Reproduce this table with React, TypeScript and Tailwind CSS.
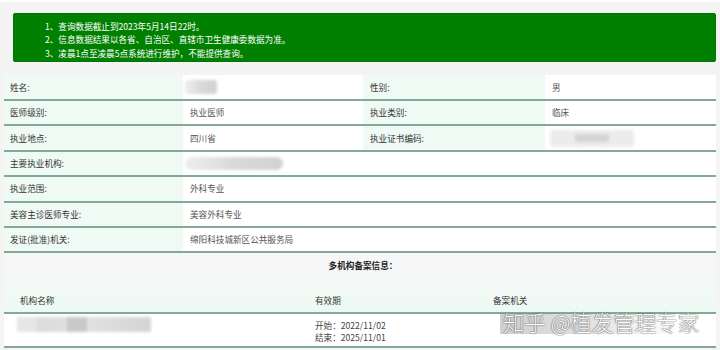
import React from "react";

const FONT = {
  fontFamily: '"Noto Sans CJK SC", "Noto Sans", sans-serif',
};

function Blur({ w, h, className = "" }: { w: number; h: number; className?: string }) {
  return (
    <div
      className={"rounded-[3px] blur-[1.5px] bg-gradient-to-r from-[#eeeeee] via-[#d9d9d9] to-[#d2d2d2] " + className}
      style={{ width: w, height: h }}
    />
  );
}

const rowBorder = "border-b-2 border-[#84a99b]";

export default function App() {
  return (
    <div
      className="relative w-[720px] h-[350px] overflow-hidden bg-[#f4f4f4] text-[8.6px] text-[#333]"
      style={FONT}
    >
      <div className="h-[2px] bg-white" />
      {/* Notice box */}
      <div className="ml-[13px] mr-[4px] mt-[11px] h-[49px] rounded-[2px] bg-[#008000] border border-[#0a6e0a] pl-[31px] pt-[5.5px] text-white leading-[13.6px] text-[8.6px]">
        <div>1、查询数据截止到2023年5月14日22时。</div>
        <div>2、信息数据结果以各省、自治区、直辖市卫生健康委数据为准。</div>
        <div>3、凌晨1点至凌晨5点系统进行维护，不能提供查询。</div>
      </div>

      {/* Info table */}
      <div className="mt-[13px] ml-[4px] mr-[4px] bg-white">
        <div className={"grid grid-cols-[179px_180px_182px_1fr] h-[26px] " + rowBorder}>
          <div className="bg-[#effaf5] pl-[6px] flex items-center">姓名:</div>
          <div className="pl-[2px] flex items-center"><Blur w={32} h={14} /></div>
          <div className="bg-[#effaf5] pl-[7px] flex items-center">性别:</div>
          <div className="pl-[7px] flex items-center text-[#555]">男</div>
        </div>
        <div className={"grid grid-cols-[179px_180px_182px_1fr] h-[25.4px] " + rowBorder}>
          <div className="bg-[#effaf5] pl-[6px] flex items-center">医师级别:</div>
          <div className="pl-[7px] flex items-center text-[#555]">执业医师</div>
          <div className="bg-[#effaf5] pl-[7px] flex items-center">执业类别:</div>
          <div className="pl-[7px] flex items-center text-[#555]">临床</div>
        </div>
        <div className={"grid grid-cols-[179px_180px_182px_1fr] h-[25.4px] " + rowBorder}>
          <div className="bg-[#effaf5] pl-[6px] flex items-center">执业地点:</div>
          <div className="pl-[7px] flex items-center text-[#555]">四川省</div>
          <div className="bg-[#effaf5] pl-[7px] flex items-center">执业证书编码:</div>
          <div className="pl-[5px] flex items-center">
            <div className="relative w-[84px] h-[17px] rounded-[3px] blur-[1.5px] bg-[#ececec] flex items-center justify-center">
              <div className="w-[34px] h-[8px] bg-[#d4d4d4] rounded-[2px]" />
            </div>
          </div>
        </div>
        <div className={"grid grid-cols-[179px_1fr] h-[25.4px] " + rowBorder}>
          <div className="bg-[#effaf5] pl-[6px] flex items-center">主要执业机构:</div>
          <div className="pl-[2px] flex items-center"><Blur w={98} h={13} className="rounded-full" /></div>
        </div>
        <div className={"grid grid-cols-[179px_1fr] h-[25.4px] " + rowBorder}>
          <div className="bg-[#effaf5] pl-[6px] flex items-center">执业范围:</div>
          <div className="pl-[7px] flex items-center text-[#555]">外科专业</div>
        </div>
        <div className={"grid grid-cols-[179px_1fr] h-[25.4px] " + rowBorder}>
          <div className="bg-[#effaf5] pl-[6px] flex items-center">美容主诊医师专业:</div>
          <div className="pl-[7px] flex items-center text-[#555]">美容外科专业</div>
        </div>
        <div className={"grid grid-cols-[179px_1fr] h-[25.4px] " + rowBorder}>
          <div className="bg-[#effaf5] pl-[6px] flex items-center">发证(批准)机关:</div>
          <div className="pl-[7px] flex items-center text-[#555]">绵阳科技城新区公共服务局</div>
        </div>

        {/* Multi-institution section */}
        <div className={"bg-gradient-to-b from-[#f6f6f6] via-[#f4f8f6] to-[#ecfaf3] h-[61px] flex flex-col " + rowBorder}>
          <div className="text-center font-bold pt-[6px] pl-[6px] leading-[12px] text-[#222]">多机构备案信息：</div>
          <div className="grid grid-cols-[304px_178px_1fr] mt-auto mb-[6px] leading-[12px]">
            <div className="pl-[16px]">机构名称</div>
            <div className="pl-[7px]">有效期</div>
            <div className="pl-[7px]">备案机关</div>
          </div>
        </div>
        <div className={"grid grid-cols-[304px_178px_1fr] h-[34px] " + rowBorder}>
          <div className="pl-[13px] pt-[3px]">
            <div className="w-[134px] h-[15px] rounded-[2px] blur-[1.5px] bg-gradient-to-r from-[#d8d8d8] via-[#e2e2e2] to-[#d4d4d4] flex">
              <div className="w-[20px] bg-[#e6e6e6]" />
              <div className="w-[30px]" />
              <div className="w-[20px] bg-[#c9c9c9]" />
            </div>
          </div>
          <div className="pl-[7px] pt-[5px] leading-[12px] text-[#444]">
            <div>开始：2022/11/02</div>
            <div>结束：2025/11/01</div>
          </div>
          <div />
        </div>
      </div>

      {/* Watermark overlay */}
      <div className="absolute left-[500px] top-[313px] w-[180px] h-[21px] bg-gradient-to-r from-[rgba(120,120,120,0.35)] via-[rgba(140,140,140,0.25)] to-[rgba(160,160,160,0)]" />
      <div
        className="absolute left-[503px] top-[308px] text-[21.5px] leading-[28px] text-white font-light whitespace-nowrap"
        style={{ textShadow: "0 0 1.5px rgba(60,60,60,0.9), 0 0 1px rgba(60,60,60,0.8)" }}
      >
        知乎 @植发管理专家
      </div>
    </div>
  );
}
